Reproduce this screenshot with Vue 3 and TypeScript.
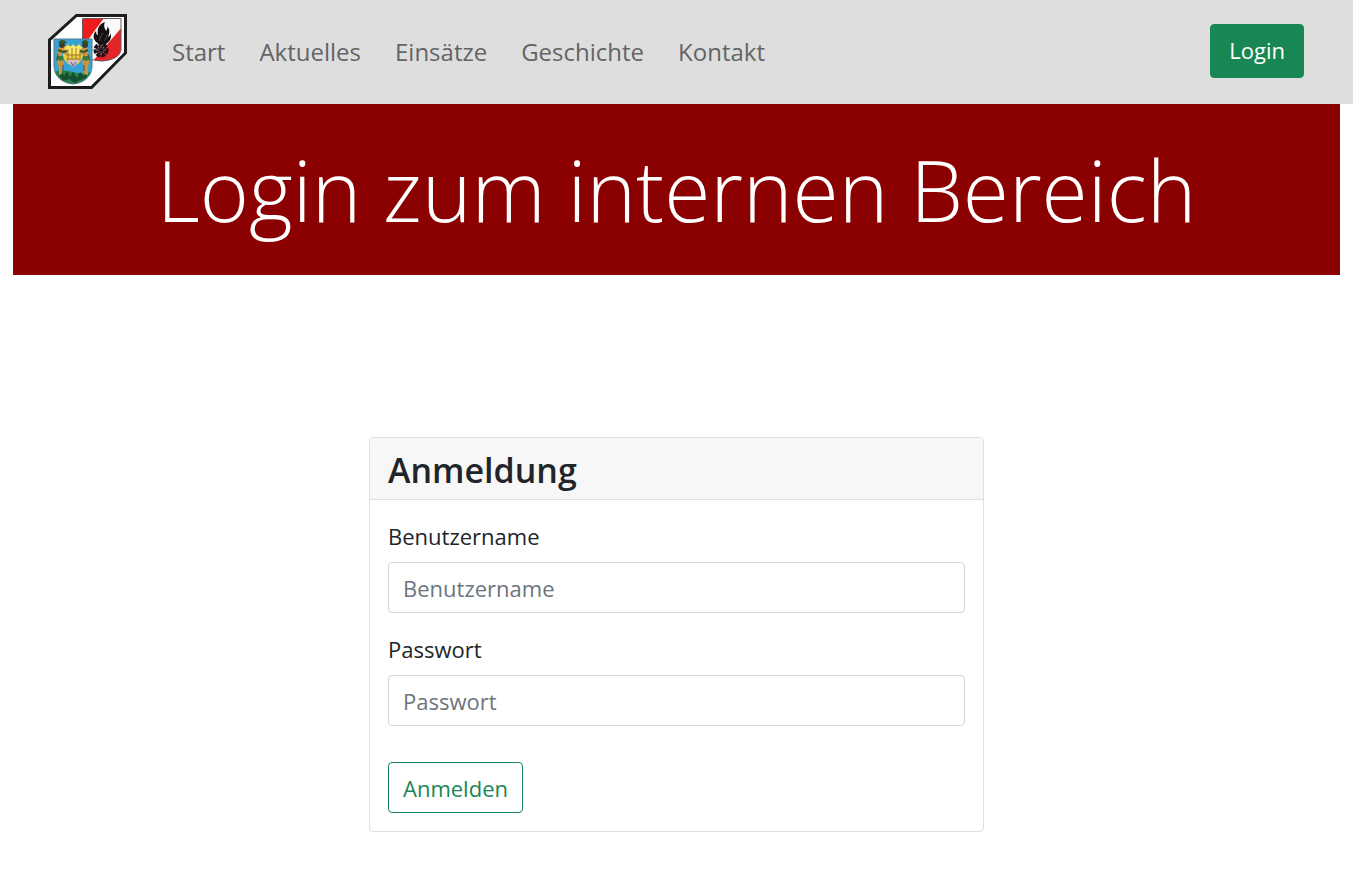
<script setup lang="ts">
import { ref } from 'vue'

interface NavItem {
  label: string
  href: string
}

const navItems: NavItem[] = [
  { label: 'Start', href: '#start' },
  { label: 'Aktuelles', href: '#aktuelles' },
  { label: 'Einsätze', href: '#einsaetze' },
  { label: 'Geschichte', href: '#geschichte' },
  { label: 'Kontakt', href: '#kontakt' },
]

const username = ref<string>('')
const password = ref<string>('')
</script>

<template>
  <header class="navbar">
    <a class="brand" href="#start" aria-label="Startseite">
      <svg class="crest" viewBox="0 0 79 75" aria-hidden="true">
        <path d="M28.5 1.5H77.5V39L43.5 73.5H1.5V26Z" fill="#fff" stroke="#1c1c1c" stroke-width="3" />
        <!-- fire brigade shield -->
        <clipPath id="fire"><path d="M34.5 4.500H73V35C73 42 65 46.500 53.500 47C42 46.500 34.500 42 34.500 36Z" /></clipPath>
        <g clip-path="url(#fire)">
          <rect x="34" y="4" width="40" height="44" fill="#fafafa" />
          <path d="M34 4H56L34 34Z" fill="#ee1c1c" />
          <path d="M74 13V48H44Z" fill="#e3252a" />
        </g>
        <path d="M34.5 4.500H73V35C73 42 65 46.500 53.500 47C42 46.500 34.500 42 34.500 36Z" fill="none" stroke="#6b5558" stroke-width="1" />
        <path d="M51 30C45 27 44 21 48 17C48 20 49 21 50 21C49 16 50 10 57 8C55 12 57 14 58 17C59 15 60 14 59 12C63 16 61 20 60 23C62 22 63 20 62 18C65 24 61 28 57 31Z" fill="#151012" />
        <path d="M52 27C51 24 53 22 55 19M56 27C58 25 59 23 59 21" fill="none" stroke="#5e4a4c" stroke-width="1" />
        <circle cx="53" cy="36" r="6" fill="none" stroke="#171315" stroke-width="3" stroke-dasharray="4 1" />
        <circle cx="53" cy="36" r="5" fill="#29191c" />
        <path d="M53 31V41M48 36H58M50 33L56 39M56 33L50 39" stroke="#8d6668" stroke-width="1" />
        <circle cx="53" cy="36" r="2" fill="#141113" />
        <!-- municipal shield -->
        <clipPath id="town"><path d="M6 25H44V52C44 62 36 69 25 70C14 69 6 62 6 52Z" /></clipPath>
        <g clip-path="url(#town)">
          <rect x="5" y="24" width="40" height="47" fill="#36a5d6" />
          <path d="M5 58Q15 55 25 58T45 57V71H5Z" fill="#258345" />
          <path d="M11 61L14 57L16 62L19 57L22 63L25 58L29 64L32 58L36 62L40 57L38 64L32 66L27 69L21 65L15 67Z" fill="#164f32" />
          <path d="M15 32L34 32L35 44L31 49L25 52L19 49L15 44Z" fill="#e9cf45" />
          <path d="M18 34L20 30L22 34L25 30L28 34L31 30L33 34V40H18Z" fill="#f8e96a" />
          <path d="M18 41H33M18 45H32M20 35V48M24 34V50M28 34V50M32 35V47" stroke="#a37b31" stroke-width="1" />
          <path d="M20 46H31L28 51L25 53L21 50Z" fill="#d1bbd5" />
          <path d="M23 48L25 52L28 48" stroke="#77595d" stroke-width="1" fill="none" />
          <path d="M10 34L14 32L17 36L20 39L18 41L14 39L14 46L16 48L14 54L14 60L11 61V54L9 48Z" fill="#c9963f" />
          <path d="M40 34L36 32L33 36L31 39L33 41L36 39L36 46L34 48L36 54L36 60L40 61V54L41 48Z" fill="#c9963f" />
          <path d="M9 42H15L16 45L13 47L8 45ZM35 42H41L42 45L38 47L34 45Z" fill="#397c42" />
          <circle cx="14" cy="31" r="3" fill="#3e3e25" />
          <circle cx="37" cy="31" r="3" fill="#3e3e25" />
          <path d="M11 29Q14 25 18 29M34 29Q37 25 40 29M10 36L15 38L19 37M40 36L36 38L32 37" fill="none" stroke="#31562b" stroke-width="2" />
          <path d="M10 40L9 47M40 40L42 47M15 51V57M36 51V57" stroke="#624c2a" stroke-width="1" />
        </g>
        <path d="M6 25H44V52C44 62 36 69 25 70C14 69 6 62 6 52Z" fill="none" stroke="#577984" stroke-width="1" />
      </svg>
    </a>
    <nav class="nav" aria-label="Hauptnavigation">
      <a v-for="item in navItems" :key="item.href" class="nav-link" :href="item.href">{{ item.label }}</a>
    </nav>
    <button class="btn btn-solid" type="button">Login</button>
  </header>

  <main class="content">
    <section class="banner">
      <h1 class="banner-title">Login zum internen Bereich</h1>
    </section>

    <section class="card" aria-labelledby="login-title">
      <h2 id="login-title" class="card-header">Anmeldung</h2>
      <form class="card-body" @submit.prevent>
        <div class="field">
          <label for="username">Benutzername</label>
          <input id="username" v-model="username" type="text" placeholder="Benutzername" autocomplete="username" />
        </div>
        <div class="field">
          <label for="password">Passwort</label>
          <input id="password" v-model="password" type="password" placeholder="Passwort" autocomplete="current-password" />
        </div>
        <button class="btn btn-outline" type="submit">Anmelden</button>
      </form>
    </section>
  </main>
</template>

<style>
body {
  background: #fff;
}
</style>

<style scoped>
.navbar,
.content {
  box-sizing: border-box;
  font-family: "Segoe UI", "Open Sans", "Noto Sans", sans-serif;
  color: #212529;
}

.navbar {
  display: flex;
  align-items: center;
  min-height: 104px;
  padding: 0 49px 0 48px;
  background: #dedede;
}

.brand {
  display: block;
  margin-right: 45px;
  padding-bottom: 1px;
}

.crest {
  display: block;
  width: 79px;
  height: 75px;
}

.nav {
  display: flex;
  flex: 1;
  gap: 34px;
}

.nav-link {
  font-size: 24px;
  line-height: 36px;
  color: #646464;
  text-decoration: none;
}

.btn {
  box-sizing: border-box;
  border: 1px solid #198754;
  border-radius: 4px;
  font-family: inherit;
  font-size: 22px;
  line-height: 34px;
  cursor: pointer;
}

.btn-solid {
  padding: 8px 18px 10px;
  margin-bottom: 2px;
  background: #198754;
  color: #fff;
}

.btn-outline {
  align-self: flex-start;
  margin-top: 18px;
  padding: 8px 14px 7px;
  background: transparent;
  color: #198754;
}

.content {
  padding: 0 13px;
}

.banner {
  padding: 32px 16px;
  background: #8b0000;
  text-align: center;
}

.banner-title {
  margin: 0;
  font-size: 84px;
  font-weight: 300;
  line-height: 107px;
  color: #fff;
}

.card {
  box-sizing: border-box;
  width: 100%;
  max-width: 615px;
  margin: 162px auto 55px;
  border: 1px solid #dfdfdf;
  border-radius: 4px;
  overflow: hidden;
}

.card-header {
  margin: 0;
  padding: 10px 18px 7px;
  border-bottom: 1px solid #dfdfdf;
  background: #f7f7f7;
  font-size: 34px;
  font-weight: 600;
  line-height: 44px;
}

.card-body {
  display: flex;
  flex-direction: column;
  gap: 18px;
  padding: 18px;
}

.field {
  display: flex;
  flex-direction: column;
  gap: 7px;
}

.field label {
  font-size: 22px;
  line-height: 37px;
}

.field input {
  box-sizing: border-box;
  width: 100%;
  height: 51px;
  padding: 7px 14px;
  border: 1px solid #ced4da;
  border-radius: 4px;
  background: #fff;
  font-family: inherit;
  font-size: 22px;
  color: #212529;
}

.field input::placeholder {
  color: #6c757d;
  opacity: 1;
}
</style>
